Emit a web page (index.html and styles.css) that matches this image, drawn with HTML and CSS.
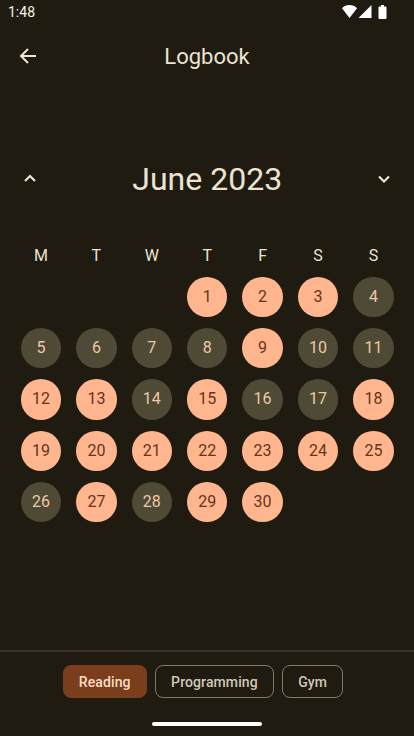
FILE: index.html
```html
<html>
    <head>
        <title>Logbook</title>
        <link rel="stylesheet" href="styles.css">
    </head>
    <body>
        <div class="screen">
            <div class="statusBar">
                <span class="clock">1:48</span>
                <div class="statusIcons">
                    <svg width="15" height="14" viewBox="0 0 15 14"><path d="M0 3.200C2 1.200 4.600 0 7.500 0s5.500 1.200 7.500 3.200L7.500 13z" fill="#fff"/></svg>
                    <svg width="14" height="14" viewBox="0 0 14 14"><path d="M13.500 0V13H0.500z" fill="#fff"/></svg>
                    <svg class="batteryIcon" width="9" height="14" viewBox="0 0 9 14"><path d="M0.500 2.500Q0.500 1.500 1.500 1.500H3V0H6V1.500H7.500Q8.500 1.500 8.500 2.500V13Q8.500 14 7.500 14H1.500Q0.500 14 0.500 13z" fill="#fff"/></svg>
                </div>
            </div>

            <div class="topBar">
                <svg class="backIcon" width="24" height="24" viewBox="0 0 24 24"><path d="M20 12H5M12 5l-7 7 7 7" fill="none" stroke="#ebe3d3" stroke-width="2"/></svg>
                <h1 class="pageTitle">Logbook</h1>
            </div>

            <div class="calendar">
                <div class="monthRow">
                    <svg width="24" height="24" viewBox="0 0 24 24"><path d="M7 14l5-5 5 5" fill="none" stroke="#ebe3d3" stroke-width="2.200"/></svg>
                    <h2 class="monthName">June 2023</h2>
                    <svg width="24" height="24" viewBox="0 0 24 24"><path d="M7 9.500l5 5 5-5" fill="none" stroke="#ebe3d3" stroke-width="2.200"/></svg>
                </div>

                <div class="weekdays">
                    <span>M</span><span>T</span><span>W</span><span>T</span><span>F</span><span>S</span><span>S</span>
                </div>

                <div class="days">
                    <span class="gap"></span><span class="gap"></span><span class="gap"></span>
                    <span class="day done">1</span>
                    <span class="day done">2</span>
                    <span class="day done">3</span>
                    <span class="day">4</span>
                    <span class="day">5</span>
                    <span class="day">6</span>
                    <span class="day">7</span>
                    <span class="day">8</span>
                    <span class="day done">9</span>
                    <span class="day">10</span>
                    <span class="day">11</span>
                    <span class="day done">12</span>
                    <span class="day done">13</span>
                    <span class="day">14</span>
                    <span class="day done">15</span>
                    <span class="day">16</span>
                    <span class="day">17</span>
                    <span class="day done">18</span>
                    <span class="day done">19</span>
                    <span class="day done">20</span>
                    <span class="day done">21</span>
                    <span class="day done">22</span>
                    <span class="day done">23</span>
                    <span class="day done">24</span>
                    <span class="day done">25</span>
                    <span class="day">26</span>
                    <span class="day done">27</span>
                    <span class="day">28</span>
                    <span class="day done">29</span>
                    <span class="day done">30</span>
                </div>
            </div>

            <div class="footer">
                <div class="chips">
                    <button class="chip selected">Reading</button>
                    <button class="chip">Programming</button>
                    <button class="chip">Gym</button>
                </div>
                <div class="navHandle"></div>
            </div>
        </div>
    </body>
</html>
```

FILE: styles.css
```css
body{
    margin: 0;
    background-color: #201b10;
    font-family: Roboto, sans-serif;
}

h1, h2{
    margin: 0;
    font-weight: 400;
}

.screen{
    width: 414px;
    height: 736px;
    display: flex;
    flex-direction: column;
    overflow: hidden;
}

.statusBar{
    height: 24px;
    padding: 0 27px 0 8px;
    display: flex;
    align-items: center;
    justify-content: space-between;
}

.clock{
    color: #f4f1ea;
    font-size: 14px;
}

.statusIcons{
    display: flex;
    align-items: center;
    gap: 1px;
}

.batteryIcon{
    margin-left: 5px;
}

.topBar{
    height: 64px;
    padding: 0 16px;
    position: relative;
    display: flex;
    align-items: center;
    justify-content: center;
}

.backIcon{
    position: absolute;
    left: 16px;
    top: 20px;
}

.pageTitle{
    color: #ebe3d3;
    font-size: 22px;
}

.calendar{
    flex: 1;
    padding: 67px 12.900px 0 13.300px;
}

.monthRow{
    height: 48px;
    padding: 0 5px;
    display: flex;
    align-items: center;
    justify-content: space-between;
}

.monthName{
    color: #ebe3d3;
    font-size: 32px;
}

.weekdays{
    margin-top: 43px;
    height: 20px;
    display: grid;
    grid-template-columns: repeat(7, 1fr);
    color: #ebe3d3;
    font-size: 16px;
    line-height: 20px;
    text-align: center;
}

.days{
    margin-top: 10.500px;
    display: grid;
    grid-template-columns: repeat(7, 1fr);
    grid-auto-rows: 40.500px;
    row-gap: 10.850px;
    justify-items: center;
}

.day{
    width: 40.500px;
    height: 40.500px;
    border-radius: 50%;
    background-color: #4f4a36;
    color: #ecc9a6;
    font-size: 16px;
    line-height: 40.500px;
    text-align: center;
}

.day.done{
    background-color: #ffb68f;
    color: #66331a;
}

.footer{
    height: 86px;
    border-top: 2px solid #39352b;
    box-sizing: border-box;
}

.chips{
    margin-top: 13px;
    padding-right: 8px;
    display: flex;
    justify-content: center;
    gap: 8px;
}

.chip{
    height: 33px;
    padding: 0 15.250px;
    border: 1px solid #7f7b6b;
    border-radius: 8px;
    background-color: transparent;
    color: #cfc9b5;
    font-family: Roboto, sans-serif;
    font-size: 14px;
    font-weight: 500;
    letter-spacing: 0.100px;
}

.chip.selected{
    border-color: #7a3e1c;
    background-color: #7a3e1c;
    color: #ffdcc8;
}

.navHandle{
    width: 110px;
    height: 4px;
    margin: 24px auto 0;
    border-radius: 2px;
    background-color: #fff;
}
```
